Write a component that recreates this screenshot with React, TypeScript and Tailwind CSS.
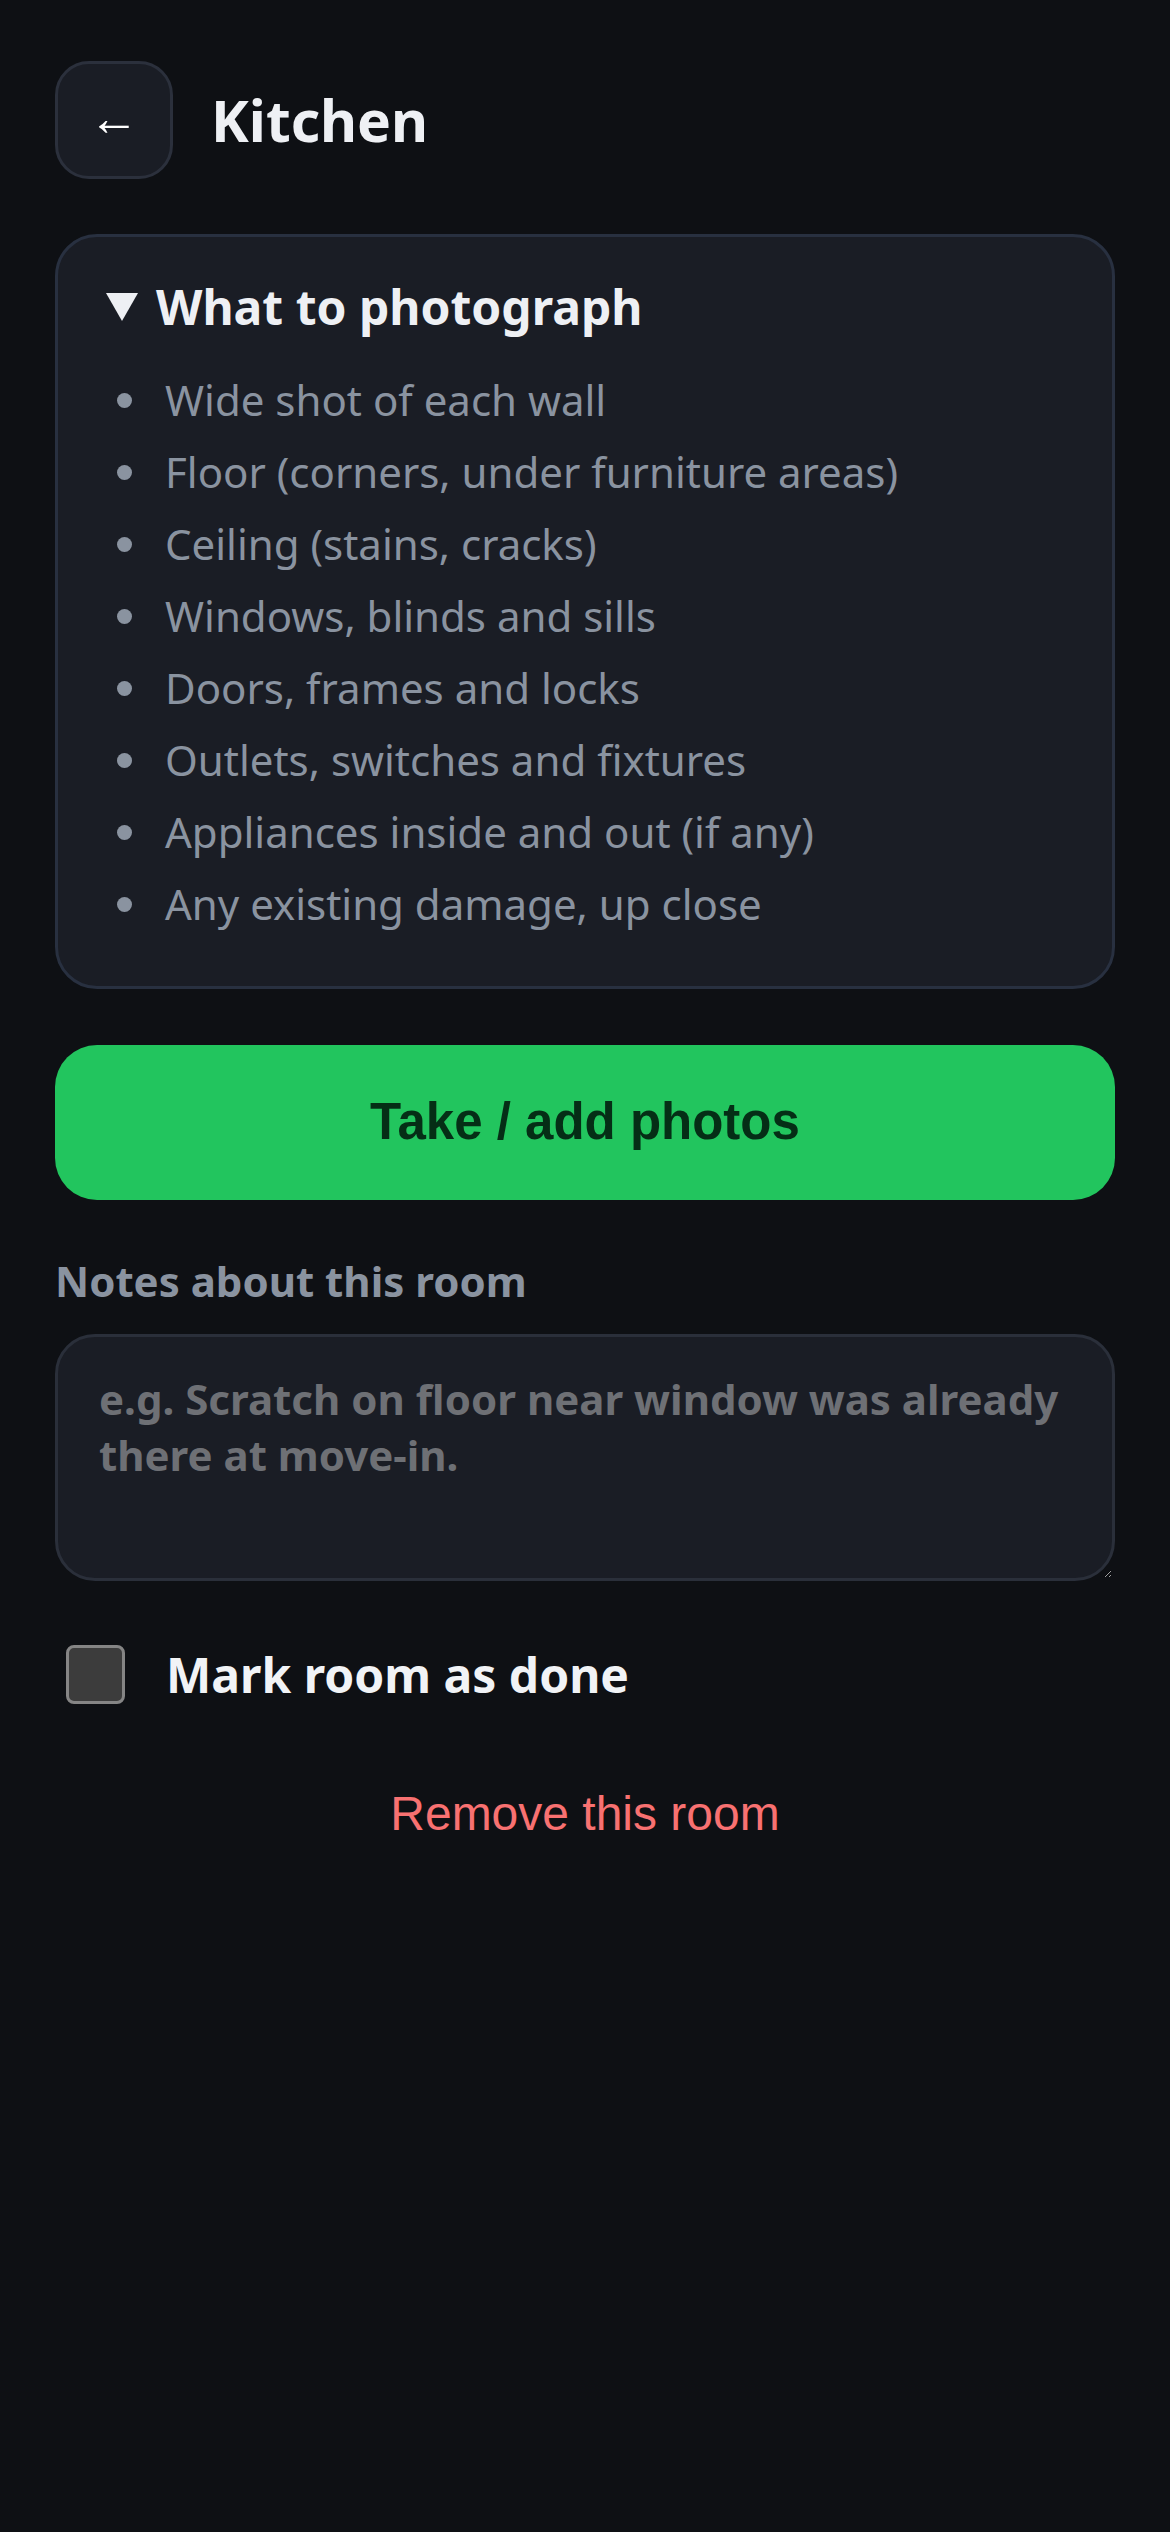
const checklist = [
  "Wide shot of each wall",
  "Floor (corners, under furniture areas)",
  "Ceiling (stains, cracks)",
  "Windows, blinds and sills",
  "Doors, frames and locks",
  "Outlets, switches and fixtures",
  "Appliances inside and out (if any)",
  "Any existing damage, up close",
];

export default function App() {
  return (
    <div className="min-h-screen bg-[#0e1014] font-['Noto_Sans',sans-serif] text-[#eef0f4]">
      <div className="flex flex-col px-[55px] pt-[61px]">
        {/* Header */}
        <div className="flex items-center gap-[38px]">
          <button className="flex h-[118px] w-[118px] items-center justify-center rounded-[34px] border-[3px] border-[#2b303c] bg-[#1a1d25] pb-[8px] text-[50px] leading-none text-white">
            ←
          </button>
          <h1 className="text-[57px] font-bold leading-none">Kitchen</h1>
        </div>

        {/* What to photograph */}
        <details
          open
          className="mt-[55px] rounded-[42px] border-[3px] border-[#283040] bg-[#1a1d25] px-[48px] pt-[40px] pb-[46px]"
        >
          <summary className="flex list-none items-center gap-[18px] text-[48px] font-bold leading-[60px] [&::-webkit-details-marker]:hidden">
            <svg width="32" height="28" viewBox="0 0 32 28" className="shrink-0">
              <polygon points="0,0 32,0 16,28" fill="#eef0f4" />
            </svg>
            What to photograph
          </summary>
          <ul className="mt-[27px]">
            {checklist.map((item) => (
              <li
                key={item}
                className="flex items-center text-[42px] leading-[72px] text-[#8a93a0]"
              >
                <span className="ml-[11px] mr-[33px] h-[15px] w-[15px] shrink-0 rounded-full bg-[#8a93a0]" />
                {item}
              </li>
            ))}
          </ul>
        </details>

        {/* Photos */}
        <button className="mt-[56px] h-[155px] rounded-[42px] bg-[#22c55e] font-['Liberation_Sans',Arial,sans-serif] text-[51px] font-bold text-[#052e16]">
          Take / add photos
        </button>

        {/* Notes */}
        <label
          htmlFor="notes"
          className="mt-[51px] text-[42px] font-bold leading-[60px] text-[#8a93a0]"
        >
          Notes about this room
        </label>
        <textarea
          id="notes"
          placeholder="e.g. Scratch on floor near window was already there at move-in."
          className="mt-[23px] h-[247px] rounded-[40px] border-[3px] border-[#2a2f3a] bg-[#1a1d25] px-[41px] pt-[34px] text-[42px] font-bold leading-[56px] text-[#eef0f4] outline-none placeholder:text-[#6e7075]"
        />

        {/* Done */}
        <label className="mt-[64px] flex items-center gap-[41px] pl-[11px]">
          <input
            type="checkbox"
            className="h-[59px] w-[59px] shrink-0 appearance-none rounded-[8px] border-[3px] border-[#858585] bg-[#3c3c3c]"
          />
          <span className="text-[48px] font-bold leading-none text-[#f1f3f6]">
            Mark room as done
          </span>
        </label>

        {/* Remove */}
        <button className="mt-[82px] self-center font-['Liberation_Sans',Arial,sans-serif] text-[48px] leading-[55px] text-[#f87171]">
          Remove this room
        </button>
      </div>
    </div>
  );
}
